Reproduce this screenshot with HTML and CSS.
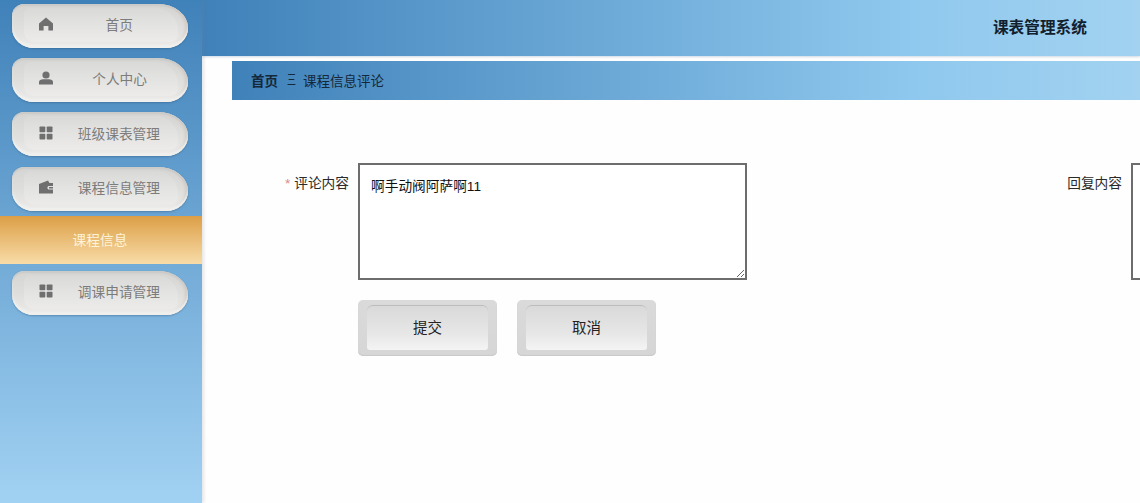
FILE: index.html
```html
<!DOCTYPE html>
<html lang="zh-CN">
<head>
  <meta charset="UTF-8">
  <title>课表管理系统</title>
  <link rel="stylesheet" href="styles.css">
</head>
<body>

  <div class="page">
    <aside class="sidebar">
      <a class="nav-btn nav-first">
        <div class="nav-face">
          <svg class="nav-icon" viewBox="0 0 14 14"><path d="M7 0.5 L14 6.5 V13.5 H9.4 V9 H4.6 V13.5 H0 V6.5 Z"/></svg>
          <span>首页</span>
        </div>
      </a>
      <a class="nav-btn nav-second">
        <div class="nav-face">
          <svg class="nav-icon" viewBox="0 0 14 14"><circle cx="7" cy="4" r="3.6"/><path d="M0 13.5 V11 C0 9 2 8.2 4 8.2 H10 C12 8.2 14 9 14 11 V13.5 Z"/></svg>
          <span>个人中心</span>
        </div>
      </a>
      <a class="nav-btn nav-third">
        <div class="nav-face">
          <svg class="nav-icon" viewBox="0 0 14 14"><rect x="0.5" y="0.5" width="5.8" height="5.8" rx="0.8"/><rect x="7.7" y="0.5" width="5.8" height="5.8" rx="0.8"/><rect x="0.5" y="7.7" width="5.8" height="5.8" rx="0.8"/><rect x="7.7" y="7.7" width="5.8" height="5.8" rx="0.8"/></svg>
          <span>班级课表管理</span>
        </div>
      </a>
      <a class="nav-btn nav-open">
        <div class="nav-face">
          <svg class="nav-icon" viewBox="0 0 14 14"><path fill-rule="evenodd" d="M0 4 L9 0.5 L10.5 3 H14 V6 H9.5 A2 2 0 0 0 9.5 9.6 H14 V13.5 H0 Z M10 7 H14 V8.6 H10 Z"/></svg>
          <span>课程信息管理</span>
        </div>
      </a>
      <a class="nav-sub">课程信息</a>
      <a class="nav-btn">
        <div class="nav-face">
          <svg class="nav-icon" viewBox="0 0 14 14"><rect x="0.5" y="0.5" width="5.8" height="5.8" rx="0.8"/><rect x="7.7" y="0.5" width="5.8" height="5.8" rx="0.8"/><rect x="0.5" y="7.7" width="5.8" height="5.8" rx="0.8"/><rect x="7.7" y="7.7" width="5.8" height="5.8" rx="0.8"/></svg>
          <span>调课申请管理</span>
        </div>
      </a>
    </aside>

    <div class="main">
      <header class="topbar">
        <div class="system-name">课表管理系统</div>
      </header>

      <div class="crumbs">
        <b>首页</b>
        <span class="crumb-sep">三</span>
        <span>课程信息评论</span>
      </div>

      <form class="comment-form">
        <div class="form-row">
          <div class="field">
            <label class="field-label"><i>*</i> 评论内容</label>
            <textarea class="field-input">啊手动阀阿萨啊11</textarea>
          </div>
          <div class="field">
            <label class="field-label">回复内容</label>
            <textarea class="field-input"></textarea>
          </div>
        </div>
        <div class="form-actions">
          <button type="button" class="key-btn"><span>提交</span></button>
          <button type="button" class="key-btn"><span>取消</span></button>
        </div>
      </form>
    </div>
  </div>

</body>
</html>
```

FILE: styles.css
```css
* {
  box-sizing: border-box;
}
html, body {
  height: 100%;
  margin: 0;
  overflow: hidden;
}
body {
  background: #fefefe;
  color: #222;
  font-family: "Liberation Sans", "Noto Sans CJK SC", sans-serif;
  font-size: 14px;
}
.page {
  display: flex;
  height: 503px;
  width: 1140px;
  overflow: hidden;
}

/* sidebar */
.sidebar {
  flex: 0 0 202px;
  display: flex;
  flex-direction: column;
  padding-top: 4px;
  background: linear-gradient(180deg, #3f81b9 0%, #a2d2f3 100%);
  box-shadow: 2px 0 3px rgba(120, 130, 140, 0.2);
  z-index: 1;
}
.nav-btn {
  display: flex;
  flex: 0 0 44px;
  width: 176px;
  margin: 0 0 10px 12px;
  padding: 4px 10px 6px 12px;
  border-radius: 12px 30px 22px 22px / 12px 24px 20px 20px;
  background: linear-gradient(180deg, #d4d4d2 0%, #dededc 50%, #ecebe9 100%);
  box-shadow: inset 0 2px 1px #cbcbc9, inset 0 -3px 2px #f0f0ee, inset -3px 0 3px #d4ccc6, 0 1px 2px rgba(40, 80, 120, 0.4);
  color: #7c7c7c;
}
.nav-third {
  margin-bottom: 11px;
}
.nav-open {
  margin-bottom: 5px;
}
.nav-face {
  display: flex;
  align-items: center;
  flex: 1;
  padding: 0 0 3px 15px;
  border-radius: 6px 22px 8px 10px;
  background: linear-gradient(180deg, #d9d9d7 0%, #e3e3e1 50%, #ecebe9 100%);
}
.nav-icon {
  flex: 0 0 14px;
  width: 14px;
  height: 14px;
  fill: #6f6f6f;
}
.nav-face span {
  flex: 1;
  text-align: right;
  padding-right: 18px;
  font-size: 13.7px;
}
.nav-first .nav-face span {
  padding-right: 45px;
}
.nav-second .nav-face span {
  padding-right: 31px;
}
.nav-third .nav-face {
  padding-bottom: 1px;
}
.nav-sub {
  flex: 0 0 48px;
  margin-bottom: 7px;
  padding: 1px 2px 0 0;
  background: linear-gradient(180deg, #dc9f46 0%, #f8dca8 100%);
  color: #fdf3d8;
  font-size: 13.7px;
  line-height: 47px;
  text-align: center;
}

/* main column */
.main {
  flex: 1;
  min-width: 0;
}
.topbar {
  display: flex;
  align-items: center;
  justify-content: flex-end;
  height: 56px;
  padding: 0 53px 3px 0;
  background: linear-gradient(90deg, #3f81b9 0%, #8fc8ee 75%, #a2d2f0 100%);
  box-shadow: 0 1px 2px rgba(90, 130, 170, 0.3);
}
.system-name {
  color: #12202e;
  font-size: 15.7px;
  font-weight: bold;
}
.crumbs {
  display: flex;
  align-items: center;
  height: 39px;
  margin: 5px 0 0 30px;
  padding: 0 0 2px 19px;
  background: linear-gradient(90deg, #3f81b9 0%, #8fc8ee 75%, #a2d2f0 100%);
  font-size: 13.5px;
  color: #15283a;
}
.crumb-sep {
  width: 8px;
  margin: 0 8px 0 9px;
  font-size: 9px;
  transform: scaleY(1.4);
}

/* form */
.comment-form {
  padding-top: 63px;
}
.form-row {
  display: flex;
}
.field {
  display: flex;
  flex: 0 0 auto;
}
.field + .field {
  margin-left: 23px;
}
.field-label {
  width: 156px;
  padding: 9px 9px 0 0;
  text-align: right;
  font-size: 13.7px;
  color: #2a2a2a;
}
.field-label i {
  color: #d88;
  font-style: normal;
}
.field + .field .field-label {
  width: 361px;
}
.field-input {
  width: 389px;
  height: 117px;
  padding: 13px 11px;
  border: 2px solid #6d6d6d;
  background: #fff;
  color: #111;
  font-family: inherit;
  font-size: 13.7px;
  line-height: 18px;
  outline: none;
}
.form-actions {
  display: flex;
  gap: 20px;
  margin: 20px 0 0 156px;
}
.key-btn {
  display: flex;
  width: 139px;
  height: 56px;
  padding: 5px 9px 6px;
  border: 0;
  border-radius: 5px;
  background: linear-gradient(180deg, #dadada 0%, #d6d6d6 100%);
  box-shadow: inset 0 -1px 1px #c9c9c9;
  color: #222;
  font-family: inherit;
  font-size: 14.5px;
}
.key-btn span {
  display: flex;
  flex: 1;
  align-items: center;
  justify-content: center;
  padding-bottom: 3px;
  border-top: 1px solid #bcbcbc;
  border-radius: 6px 6px 3px 3px;
  background: linear-gradient(180deg, #d9d9d9 0%, #e6e6e6 60%, #f4f4f4 100%);
}
```
